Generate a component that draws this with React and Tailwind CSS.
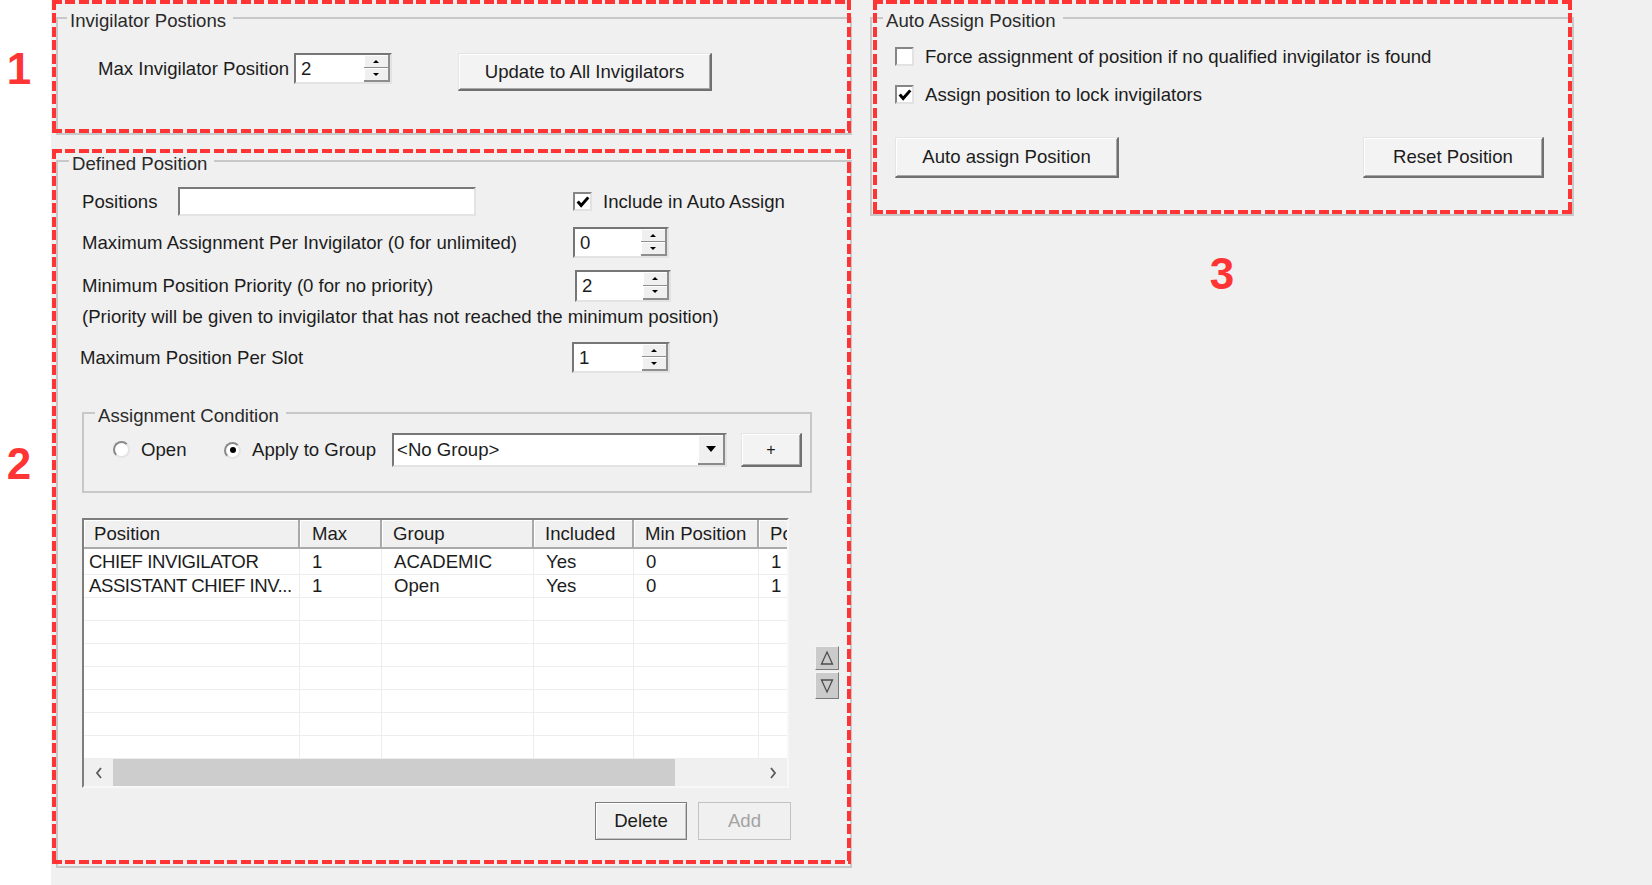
import React from 'react';

const GroupBox = ({ title, titleLeft = 'left-[11px]', className = '', children }) => (
  <div className={`relative border-2 border-[#c8c8c8] ${className}`}>
    <span className={`absolute -top-[9px] ${titleLeft} bg-[#f0f0f0] pl-[3px] pr-[7px] leading-[22px] text-[#2a2a2a] whitespace-nowrap`}>
      {title}
    </span>
    {children}
  </div>
);

const Button = ({ children, className = '' }) => (
  <div
    className={`flex items-center justify-center bg-[#f3f3f3] border-t border-l border-r-2 border-b-2 border-t-[#e4e4e4] border-l-[#e4e4e4] border-r-[#707070] border-b-[#707070] shadow-[inset_1px_1px_0_#ffffff,inset_-1px_-1px_0_#a8a8a8] whitespace-nowrap ${className}`}
  >
    {children}
  </div>
);

const CheckBox = ({ checked }) => (
  <div className="w-[19px] h-[19px] shrink-0 flex items-center justify-center bg-white border-2 border-t-[#868686] border-l-[#868686] border-r-[#e2e2e2] border-b-[#e2e2e2]">
    {checked && (
      <svg width="14" height="14" viewBox="0 0 13 13">
        <path d="M1.6 6 L4.8 9.8 L11.4 2.2" fill="none" stroke="#000" strokeWidth="2.8" />
      </svg>
    )}
  </div>
);

const Radio = ({ selected }) => (
  <div className="w-[17px] h-[17px] shrink-0 rounded-full flex items-center justify-center bg-white border-2 border-t-[#8a8a8a] border-l-[#8a8a8a] border-r-[#e4e4e4] border-b-[#e4e4e4]">
    {selected && <div className="w-[6px] h-[6px] rounded-full bg-black" />}
  </div>
);

const Spinner = ({ value, className = '' }) => (
  <div className={`flex shrink-0 bg-white border-2 border-t-[#767676] border-l-[#767676] border-r-[#e3e3e3] border-b-[#e3e3e3] ${className}`}>
    <div className="flex-1 flex items-center pl-[5px]">{value}</div>
    <div className="w-[26px] flex flex-col">
      <div className="flex-1 flex items-center justify-center bg-[#f0f0f0] border-r-2 border-b border-[#8e8e8e] shadow-[inset_1px_1px_0_#ffffff]">
        <div className="w-0 h-0 border-x-[3px] border-x-transparent border-b-[3px] border-b-black" />
      </div>
      <div className="flex-1 flex items-center justify-center bg-[#f0f0f0] border-r-2 border-b-2 border-[#8e8e8e] shadow-[inset_1px_1px_0_#ffffff]">
        <div className="w-0 h-0 border-x-[3px] border-x-transparent border-t-[3px] border-t-black" />
      </div>
    </div>
  </div>
);

const columns = [
  { name: 'Position', w: 'w-[216px]', hp: 'pl-[10px]', dp: 'pl-[5px]' },
  { name: 'Max', w: 'w-[82px]', hp: 'pl-[12px]', dp: 'pl-[12px]' },
  { name: 'Group', w: 'w-[152px]', hp: 'pl-[11px]', dp: 'pl-[12px]' },
  { name: 'Included', w: 'w-[100px]', hp: 'pl-[11px]', dp: 'pl-[12px]' },
  { name: 'Min Position', w: 'w-[125px]', hp: 'pl-[11px]', dp: 'pl-[12px]' },
  { name: 'Position', w: 'w-[125px]', hp: 'pl-[11px]', dp: 'pl-[12px]' },
];

const rows = [
  ['CHIEF INVIGILATOR', '1', 'ACADEMIC', 'Yes', '0', '1'],
  ['ASSISTANT CHIEF INV...', '1', 'Open', 'Yes', '0', '1'],
  ['', '', '', '', '', ''],
  ['', '', '', '', '', ''],
  ['', '', '', '', '', ''],
  ['', '', '', '', '', ''],
  ['', '', '', '', '', ''],
  ['', '', '', '', '', ''],
  ['', '', '', '', '', ''],
];

const Chevron = ({ dir }) => (
  <svg width="8" height="12" viewBox="0 0 8 12">
    <path d={dir === 'left' ? 'M6 1 L2 6 L6 11' : 'M2 1 L6 6 L2 11'} fill="none" stroke="#5a5a5a" strokeWidth="1.8" />
  </svg>
);

const PositionTable = () => (
  <div className="w-[707px] h-[270px] shrink-0 flex flex-col overflow-hidden bg-white border-2 border-t-[#7e7e7e] border-l-[#7e7e7e] border-r-[#f7f7f7] border-b-[#f7f7f7]">
    <div className="flex w-max h-[29px] shrink-0 bg-[#f0f0f0]">
      {columns.map((c, i) => (
        <div
          key={i}
          className={`${c.w} ${c.hp} shrink-0 flex items-center overflow-hidden whitespace-nowrap border-r-2 border-b-2 border-r-[#a9a9a9] border-b-[#a9a9a9] shadow-[inset_1px_1px_0_#ffffff]`}
        >
          {c.name}
        </div>
      ))}
    </div>
    {rows.map((r, ri) => (
      <div key={ri} className={`flex w-max shrink-0 ${ri === 0 ? 'h-[26px]' : 'h-[23px]'}`}>
        {r.map((v, ci) => (
          <div
            key={ci}
            className={`${columns[ci].w} ${columns[ci].dp} shrink-0 flex items-center overflow-hidden whitespace-nowrap border-r border-b border-[#ededed] ${ci === 0 ? 'tracking-[-0.45px]' : ''}`}
          >
            {v}
          </div>
        ))}
      </div>
    ))}
    <div className="flex h-[27px] shrink-0 bg-[#f0f0f0]">
      <div className="w-[29px] flex items-center justify-center">
        <Chevron dir="left" />
      </div>
      <div className="w-[562px] bg-[#cdcdcd]" />
      <div className="flex-1" />
      <div className="w-[29px] flex items-center justify-center">
        <Chevron dir="right" />
      </div>
    </div>
  </div>
);

const MoveButton = ({ up }) => (
  <div
    className={`w-[24px] flex items-center justify-center bg-[#cbcbcb] border border-t-[#f4f4f4] border-l-[#f4f4f4] border-r-[#7a7a7a] border-b-[#7a7a7a] ${up ? 'h-[24px]' : 'h-[27px]'}`}
  >
    <svg width="14" height="16" viewBox="0 0 14 16">
      <path
        d={up ? 'M1.5 14 L7 2 L12.5 14 Z' : 'M1.5 2 L7 14 L12.5 2 Z'}
        fill="none"
        stroke="#4e4e4e"
        strokeWidth="1.3"
      />
    </svg>
  </div>
);

// red dashed annotation frame, dash 10px / gap 3.5px
const dashed =
  'absolute pointer-events-none [background:repeating-linear-gradient(90deg,#ff3535_0_10px,transparent_0_13.5px)_0_0/100%_4px_no-repeat,repeating-linear-gradient(90deg,#ff3535_0_10px,transparent_0_13.5px)_0_100%/100%_4px_no-repeat,repeating-linear-gradient(180deg,#ff3535_0_10px,transparent_0_13.5px)_0_0/4px_100%_no-repeat,repeating-linear-gradient(180deg,#ff3535_0_10px,transparent_0_13.5px)_100%_0/4px_100%_no-repeat]';

export default function App() {
  return (
    <div className="relative flex w-[1652px] h-[885px] overflow-hidden bg-white font-['Liberation_Sans',Arial,sans-serif] text-[18.6px] text-[#1c1c1c]">
      {/* annotation numbers */}
      <div className="w-[51px] shrink-0 flex flex-col">
        <div className="w-[38px] mt-[47px] text-center text-[44px] leading-[44px] font-bold text-[#ff3535]">1</div>
        <div className="w-[38px] mt-[351px] text-center text-[44px] leading-[44px] font-bold text-[#ff3535]">2</div>
      </div>

      <div className="flex-1 flex bg-[#f0f0f0]">
        {/* left column */}
        <div className="w-[801px] shrink-0 pl-[5px] flex flex-col">
          <GroupBox title="Invigilator Postions" titleLeft="left-[9px]" className="mt-[17px] w-[796px] h-[118px]">
            <div className="flex items-start mt-[34px] pl-[40px]">
              <div className="w-[196px] h-[31px] flex items-center whitespace-nowrap">Max Invigilator Position</div>
              <Spinner value="2" className="w-[98px] h-[31px]" />
              <Button className="ml-[66px] w-[254px] h-[38px]">Update to All Invigilators</Button>
            </div>
          </GroupBox>

          <GroupBox title="Defined Position" className="mt-[25px] w-[796px] h-[708px]">
            <div className="flex flex-col pl-[24px]">
              <div className="flex items-center h-[29px] mt-[25px]">
                <div className="w-[96px]">Positions</div>
                <div className="w-[298px] h-[29px] bg-white border-2 border-t-[#7a7a7a] border-l-[#7a7a7a] border-r-[#e3e3e3] border-b-[#e3e3e3]" />
                <div className="ml-[97px]">
                  <CheckBox checked />
                </div>
                <span className="ml-[11px] whitespace-nowrap">Include in Auto Assign</span>
              </div>

              <div className="flex items-center h-[31px] mt-[11px]">
                <div className="w-[491px] whitespace-nowrap">Maximum Assignment Per Invigilator (0 for unlimited)</div>
                <Spinner value="0" className="w-[96px] h-[31px]" />
              </div>

              <div className="flex items-center h-[32px] mt-[12px]">
                <div className="w-[493px] whitespace-nowrap">Minimum Position Priority (0 for no priority)</div>
                <Spinner value="2" className="w-[96px] h-[32px]" />
              </div>

              <div className="mt-[4px] h-[22px] leading-[22px] whitespace-nowrap">
                (Priority will be given to invigilator that has not reached the minimum position)
              </div>

              <div className="flex items-center h-[31px] mt-[14px]">
                <div className="w-[490px] -ml-[2px] whitespace-nowrap">Maximum Position Per Slot</div>
                <Spinner value="1" className="ml-[2px] w-[98px] h-[31px]" />
              </div>

              <GroupBox title="Assignment Condition" className="mt-[39px] w-[730px] h-[81px]">
                <div className="flex items-center h-[34px] mt-[19px] pl-[29px]">
                  <div className="w-[111px] flex items-center">
                    <Radio />
                    <span className="ml-[11px]">Open</span>
                  </div>
                  <Radio selected />
                  <span className="ml-[11px] whitespace-nowrap">Apply to Group</span>
                  <div className="ml-[16px] w-[335px] h-[34px] flex bg-white border-2 border-t-[#777777] border-l-[#777777] border-r-[#e3e3e3] border-b-[#e3e3e3]">
                    <div className="flex-1 flex items-center pl-[3px]">&lt;No Group&gt;</div>
                    <div className="w-[27px] flex items-center justify-center bg-[#f0f0f0] border-r-2 border-b-2 border-[#8a8a8a] shadow-[inset_1px_1px_0_#ffffff]">
                      <div className="w-0 h-0 border-x-[5px] border-x-transparent border-t-[6px] border-t-black" />
                    </div>
                  </div>
                  <Button className="ml-[14px] w-[61px] h-[34px] text-[16px]">+</Button>
                </div>
              </GroupBox>

              <div className="flex items-start mt-[25px]">
                <PositionTable />
                <div className="ml-[26px] mt-[128px] flex flex-col gap-[2px]">
                  <MoveButton up />
                  <MoveButton />
                </div>
              </div>

              <div className="flex mt-[14px] ml-[513px]">
                <div className="w-[92px] h-[38px] flex items-center justify-center bg-[#f0f0f0] border border-[#7c7c7c] shadow-[inset_1px_1px_0_#ffffff,inset_-1px_-1px_0_#c4c4c4]">
                  Delete
                </div>
                <div className="ml-[11px] w-[93px] h-[38px] flex items-center justify-center bg-[#f0f0f0] border border-[#c2c2c2] text-[#a3a3a3]">
                  Add
                </div>
              </div>
            </div>
          </GroupBox>
        </div>

        {/* right column */}
        <div className="pl-[18px] flex flex-col">
          <GroupBox title="Auto Assign Position" className="mt-[17px] w-[704px] h-[199px]">
            <div className="flex flex-col pl-[23px] pr-[28px]">
              <div className="flex items-center h-[19px] mt-[28px]">
                <CheckBox />
                <span className="ml-[11px] whitespace-nowrap">Force assignment of position if no qualified invigilator is found</span>
              </div>
              <div className="flex items-center h-[19px] mt-[19px]">
                <CheckBox checked />
                <span className="ml-[11px] whitespace-nowrap">Assign position to lock invigilators</span>
              </div>
              <div className="flex justify-between mt-[33px]">
                <Button className="w-[224px] h-[41px]">Auto assign Position</Button>
                <Button className="w-[181px] h-[41px]">Reset Position</Button>
              </div>
            </div>
          </GroupBox>
          <div className="w-[704px] mt-[36px] text-center text-[44px] leading-[44px] font-bold text-[#ff3535]">3</div>
        </div>
      </div>

      {/* annotation frames */}
      <div className={`${dashed} left-[52px] top-[0px] w-[799px] h-[133px]`} />
      <div className={`${dashed} left-[52px] top-[149px] w-[799px] h-[715px]`} />
      <div className={`${dashed} left-[873px] top-[0px] w-[699px] h-[214px]`} />
    </div>
  );
}
